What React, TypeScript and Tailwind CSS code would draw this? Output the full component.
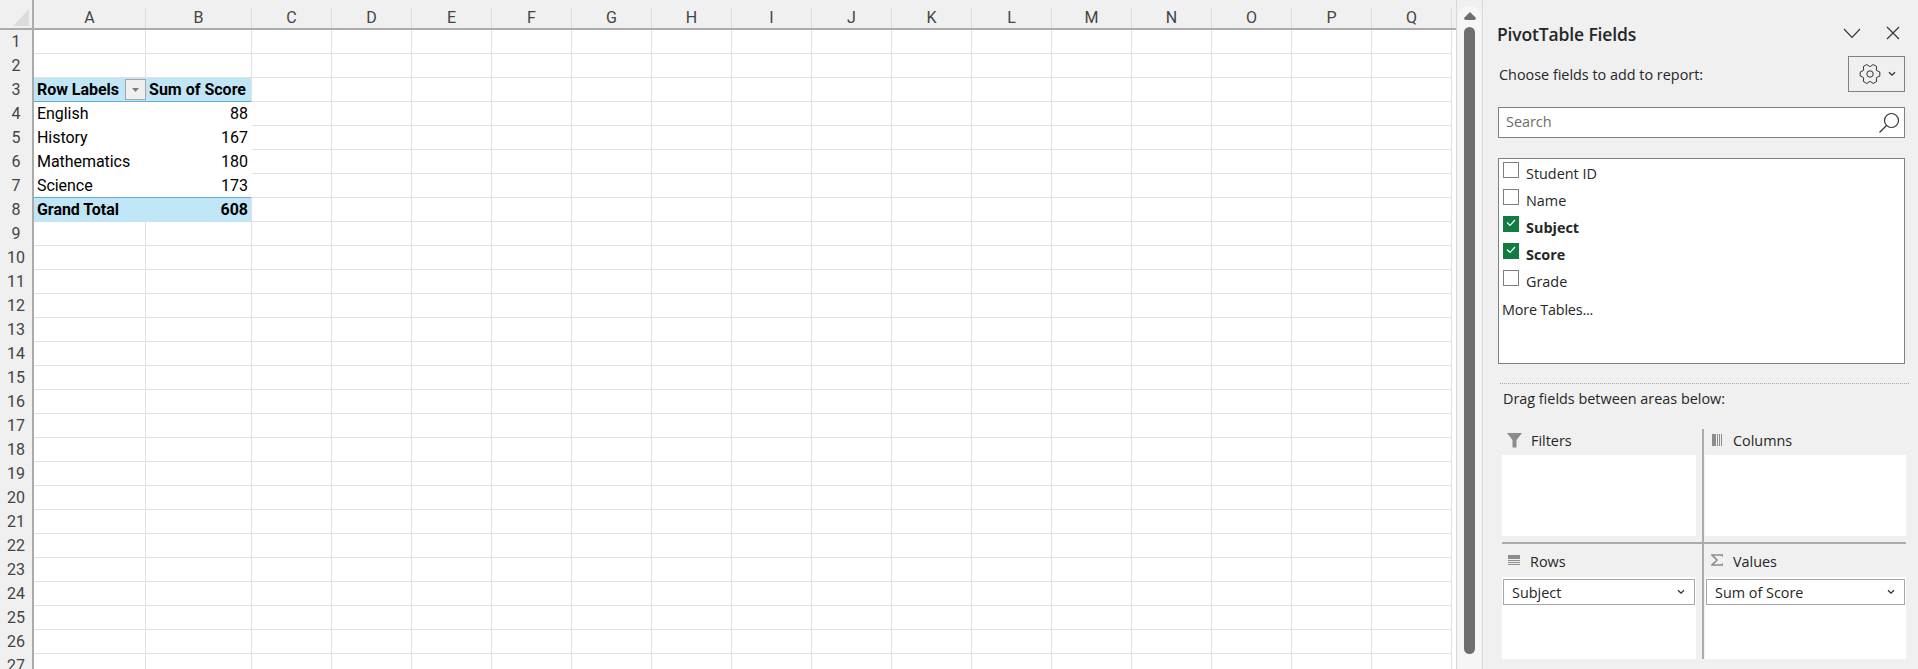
import React from "react";

const COLS = ["C","D","E","F","G","H","I","J","K","L","M","N","O","P","Q"];
const ROW_COUNT = 27;

const data: Record<number, { a: string; b: string; kind: "head" | "body" | "total" }> = {
  3: { a: "Row Labels", b: "Sum of Score", kind: "head" },
  4: { a: "English", b: "88", kind: "body" },
  5: { a: "History", b: "167", kind: "body" },
  6: { a: "Mathematics", b: "180", kind: "body" },
  7: { a: "Science", b: "173", kind: "body" },
  8: { a: "Grand Total", b: "608", kind: "total" },
};

function gearPath() {
  const pts: string[] = [];
  const cx = 11, cy = 10;
  for (let i = 0; i < 6; i++) {
    const a = (i * Math.PI) / 3;
    const seq: [number, number][] = [
      [a - 0.5, 7.4],
      [a - 0.2, 10],
      [a + 0.2, 10],
      [a + 0.5, 7.4],
    ];
    for (const [t, r] of seq) pts.push(`${(cx + r * Math.cos(t)).toFixed(2)} ${(cy + r * Math.sin(t)).toFixed(2)}`);
  }
  return "M" + pts.join("L") + "Z";
}

function SmallChevron() {
  return (
    <svg width="8" height="6" viewBox="0 0 8 6" fill="none" stroke="#333" strokeWidth="1.3">
      <path d="M1 1.2 L4 4.2 L7 1.2" />
    </svg>
  );
}

function Check() {
  return (
    <div className="w-4 h-4 bg-[#107c41] flex items-start justify-center pt-[3px] shrink-0">
      <svg width="10" height="8" viewBox="0 0 10 8" fill="none" stroke="#fff" strokeWidth="1.2">
        <path d="M1 3.5 L4 6.5 L9 1" />
      </svg>
    </div>
  );
}

function Field({ label, checked, top }: { label: string; checked?: boolean; top: string }) {
  return (
    <div className="flex h-[27px] items-start">
      {checked ? <Check /> : <div className="w-4 h-4 border border-[#7f7f7f] bg-white shrink-0" />}
      <span className={`ml-[7px] text-[#262626] leading-[20px] ${top} ${checked ? "font-bold" : ""}`}>{label}</span>
    </div>
  );
}

function Pill({ label }: { label: string }) {
  return (
    <div className="mt-[2px] mx-[1px] h-[26px] border border-[#a6a6a6] bg-white flex items-center justify-between pl-[8px] pr-[9px] text-[#262626]">
      <span className="mt-[1px]">{label}</span>
      <SmallChevron />
    </div>
  );
}

export default function App() {
  const rows = Array.from({ length: ROW_COUNT }, (_, i) => i + 1);
  return (
    <div className="flex w-[1918px] h-[669px] overflow-hidden bg-[#f0f0f0] font-['Roboto',sans-serif]">
      {/* Sheet */}
      <div className="w-[1456px] h-[669px] shrink-0 overflow-hidden bg-white flex flex-col text-[16px] text-black">
        <div className="flex h-[30px] shrink-0 bg-[#f0f0f0]">
          <div className="w-[34px] h-[30px] shrink-0 border-r-2 border-b-2 border-[#ababab] flex items-end justify-end pr-[3px] pb-[2px]">
            <svg width="16" height="17" viewBox="0 0 16 17"><path d="M16 0 V17 H0 Z" fill="#dcdcdc" /></svg>
          </div>
          {[["A", "w-[112px]"], ["B", "w-[106px]"]].map(([c, w]) => (
            <div key={c} className={`${w} h-[30px] shrink-0 pt-2 border-b-2 border-[#ababab]`}>
              <div className="h-[20px] border-r border-[#dcdcdc] flex items-center justify-center text-[#444] text-[16px]">{c}</div>
            </div>
          ))}
          {COLS.map((c) => (
            <div key={c} className="w-[80px] h-[30px] shrink-0 pt-2 border-b-2 border-[#ababab]">
              <div className="h-[20px] border-r border-[#dcdcdc] flex items-center justify-center text-[#444] text-[16px]">{c}</div>
            </div>
          ))}
          <div className="flex-1 bg-[#f0f0f0] border-b-2 border-[#ababab]" />
        </div>
        {rows.map((r) => {
          const d = data[r];
          const bg = d && d.kind !== "body" ? "bg-[#c0e6f5]" : "bg-white";
          const bottom = r === 3 || r === 7 ? "border-b border-[#61aed6]" : d && d.kind === "body" ? "border-b border-white" : d ? "border-b border-[#c0e6f5]" : "border-b border-[#e1e1e1]";
          const weight = d && d.kind !== "body" ? "font-bold" : "";
          return (
            <div key={r} className="flex h-6 shrink-0">
              <div className="w-[34px] h-6 shrink-0 bg-[#f0f0f0] border-r-2 border-[#ababab] flex items-center justify-center text-[#444] text-[16px]">{r}</div>
              <div className={`w-[112px] h-6 shrink-0 flex items-center justify-between pl-[3px] ${bg} ${bottom} ${d ? "" : "border-r border-r-[#e1e1e1]"} ${weight}`}>
                {d && <span className="mt-[1px] tracking-[-0.05px]">{d.a}</span>}
                {r === 3 && (
                  <div className="w-[21px] h-[21px] bg-[#efefef] border border-[#a6a6a6] flex items-center justify-center">
                    <svg width="7" height="4" viewBox="0 0 7 4"><path d="M0 0 H7 L3.5 4 Z" fill="#7a7a7a" /></svg>
                  </div>
                )}
              </div>
              <div className={`w-[106px] h-6 shrink-0 flex items-center justify-end ${r === 3 ? "pr-[5px]" : "pr-[3px]"} ${bg} ${bottom} border-r ${d && d.kind === "body" ? "border-r-white" : "border-r-[#e1e1e1]"} ${weight}`}>
                {d && <span className="mt-[1px]">{d.b}</span>}
              </div>
              {COLS.map((c) => (
                <div key={c} className="w-[80px] h-6 shrink-0 border-r border-b border-[#e1e1e1]" />
              ))}
            </div>
          );
        })}
      </div>

      {/* Scrollbar */}
      <div className="w-[27px] h-[669px] shrink-0 bg-[#f0f0f0] border-l border-r border-[#d9d9d9] flex flex-col">
        <div className="mx-[1px] mt-[6px] flex-1 bg-[#f6f6f6] rounded-t-[10px] flex flex-col items-center">
          <svg className="mt-[6px]" width="12" height="8" viewBox="0 0 12 8"><path d="M6 0 L12 6 Q12 8 10 8 H2 Q0 8 0 6 Z" fill="#6e6e6e" /></svg>
          <div className="mt-[7px] w-[11px] h-[627px] bg-[#6e6e6e] rounded-[6px]" />
        </div>
      </div>

      {/* Panel */}
      <div className="flex-1 h-[669px] bg-[#f0f0f0] flex flex-col pl-[15px] font-['Open_Sans',sans-serif] text-[14.4px] text-[#262626]">
        <div className="h-[56px] shrink-0 flex items-start justify-between pt-[22px]">
          <div className="text-[17.5px] leading-[24px] font-semibold text-[#262626] -ml-[1px] tracking-[-0.15px]">PivotTable Fields</div>
          <div className="flex items-center gap-[25px] mr-[18px] mt-[4px]">
            <svg width="18" height="11" viewBox="0 0 18 11" fill="none" stroke="#333" strokeWidth="1.1"><path d="M1 1 L9 9.5 L17 1" /></svg>
            <svg width="14" height="14" viewBox="0 0 14 14" fill="none" stroke="#333" strokeWidth="1.2"><path d="M1 1 L13 13 M13 1 L1 13" /></svg>
          </div>
        </div>
        <div className="h-[36px] shrink-0 flex items-center justify-between pr-[13px]">
          <div className="ml-[1px] mt-[1px]">Choose fields to add to report:</div>
          <div className="w-[57px] h-[36px] border border-[#808080] bg-[#f0f0f0] flex items-center pl-[10px] gap-[7px]">
            <svg width="22" height="20" viewBox="0 0 22 20" fill="none" stroke="#333" strokeWidth="1" strokeLinejoin="round">
              <path d={gearPath()} />
              <circle cx="11" cy="10" r="3.2" />
            </svg>
            <SmallChevron />
          </div>
        </div>
        <div className="mt-[15px] mr-[13px] h-[31px] shrink-0 border border-[#808080] bg-white flex items-center justify-between pl-[7px] pr-[4px]">
          <span className="text-[#6b6b6b] -mt-[1px]">Search</span>
          <svg width="22" height="22" viewBox="0 0 22 22" fill="none" stroke="#333" strokeWidth="1.2"><circle cx="13.5" cy="8.5" r="7" /><path d="M8.5 13.5 L1.5 20.5" /></svg>
        </div>
        <div className="mt-[20px] mr-[13px] h-[206px] shrink-0 border border-[#808080] bg-white pl-[4px] pt-[3px]">
          <Field label="Student ID" top="mt-[2px]" />
          <Field label="Name" top="mt-[2px]" />
          <Field label="Subject" checked top="mt-[2px]" />
          <Field label="Score" checked top="mt-[2px]" />
          <Field label="Grade" top="mt-[2px]" />
          <div className="mt-[3px] -ml-[1px] leading-[20px] tracking-[-0.2px] text-[#262626]">More Tables...</div>
        </div>
        <div className="mt-[19px] ml-[2px] mr-[9px] h-0 shrink-0 border-t border-dotted border-[#a6a6a6]" />
        <div className="mt-[5px] ml-[5px] h-[20px] leading-[20px] shrink-0">Drag fields between areas below:</div>
        <div className="mt-[20px] ml-[4px] w-[404px] grid grid-cols-[202px_202px] grid-rows-[115px_115px] shrink-0">
          <div className="border-r-2 border-b-2 border-[#ababab] flex flex-col">
            <div className="h-[26px] flex items-center pl-[5px] gap-[9px] shrink-0">
              <svg className="-mt-[3px]" width="15" height="15" viewBox="0 0 15 15"><path d="M0 0 H15 L9.5 7 V14.5 H5.5 V7 Z" fill="#8c8c8c" /></svg>
              <span className="-mt-[3px]">Filters</span>
            </div>
            <div className="h-[81px] mr-[6px] bg-white shrink-0" />
          </div>
          <div className="border-b-2 border-[#ababab] flex flex-col pl-[1px]">
            <div className="h-[26px] flex items-center pl-[7px] gap-[11px] shrink-0">
              <svg className="-mt-[5px]" width="10" height="12" viewBox="0 0 10 12" fill="#8c8c8c"><rect x="0" y="0" width="4" height="12" /><rect x="5" y="0" width="1" height="12" /><rect x="7" y="0" width="1" height="12" /><rect x="9" y="0" width="1" height="12" /></svg>
              <span className="-mt-[3px]">Columns</span>
            </div>
            <div className="h-[81px] bg-white shrink-0" />
          </div>
          <div className="border-r-2 border-[#ababab] flex flex-col">
            <div className="h-[33px] flex items-center pl-[6px] gap-[10px] shrink-0">
              <svg className="-mt-[1px]" width="12" height="10" viewBox="0 0 12 10" fill="#8c8c8c"><rect width="12" height="4" /><rect y="5" width="12" height="1" /><rect y="7" width="12" height="1" /><rect y="9" width="12" height="1" /></svg>
              <span className="mt-[3px]">Rows</span>
            </div>
            <div className="h-[82px] mr-[6px] bg-white shrink-0"><Pill label="Subject" /></div>
          </div>
          <div className="flex flex-col pl-[1px]">
            <div className="h-[33px] flex items-center pl-[6px] gap-[10px] shrink-0">
              <svg className="-mt-[1px]" width="12" height="12" viewBox="0 0 12 12" fill="none" stroke="#8c8c8c" strokeWidth="1.6"><path d="M11.5 2.5 V1 H1 L6 6 L1 11 H11.5 V9.5" /></svg>
              <span className="mt-[3px]">Values</span>
            </div>
            <div className="h-[82px] bg-white shrink-0"><Pill label="Sum of Score" /></div>
          </div>
        </div>
      </div>
    </div>
  );
}
